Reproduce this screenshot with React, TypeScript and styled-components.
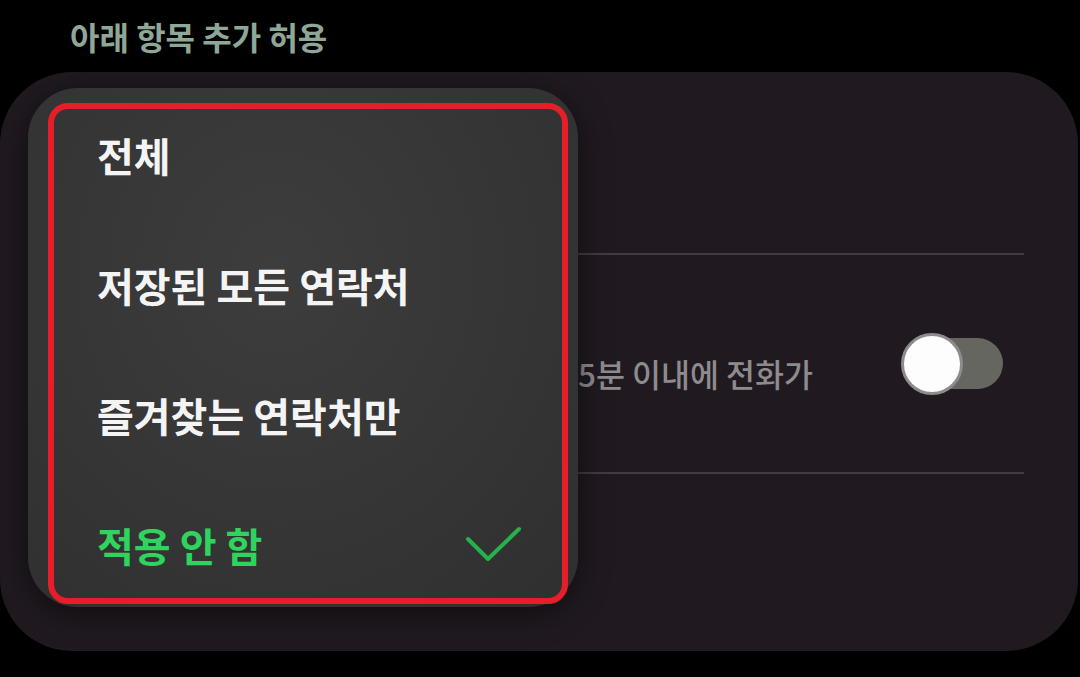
import * as React from 'react';
import styled, {createGlobalStyle} from 'styled-components';

const GlobalStyle = createGlobalStyle`
    html, body {
        margin: 0;
        padding: 0;
        background: #000;
    }
    body {
        font-family: "Noto Sans CJK KR", "Noto Sans", sans-serif;
    }
    * {
        box-sizing: border-box;
    }
`;

const Page = styled.div`
    position: relative;
    width: 1080px;
    height: 677px;
    overflow: hidden;
    background: #000;
    display: flex;
    flex-direction: column;
`;

const SectionTitle = styled.h2`
    margin: 0;
    height: 72px;
    padding-left: 70px;
    display: flex;
    align-items: center;
    font-size: 32px;
    font-weight: 700;
    color: #8fa797;
`;

const Card = styled.section`
    margin-right: 2px;
    height: 579px;
    background: #201a20;
    border-radius: 72px;
    display: flex;
    flex-direction: column;
`;

// the rows sit under the open menu; only their right side shows
const Row = styled.div<{$height: number; $indent: number}>`
    height: ${p => p.$height}px;
    display: flex;
    align-items: center;
    padding: 0 75px 0 ${p => p.$indent}px;
    gap: 40px;
`;

const Divider = styled.hr`
    margin: 0 54px;
    border: none;
    height: 2px;
    background: #433a43;
`;

const TextCol = styled.div`
    flex: 1;
    padding-top: 18px;
`;

const RowSub = styled.div`
    font-size: 31.5px;
    font-weight: 500;
    color: #8e8b8f;
    white-space: nowrap;
`;

const Toggle = styled.div`
    position: relative;
    width: 102px;
    height: 62px;
    flex-shrink: 0;
    display: flex;
    align-items: center;
    justify-content: flex-end;
`;

const Track = styled.div`
    width: 96px;
    height: 51px;
    border-radius: 26px;
    background: #65665f;
`;

const Thumb = styled.div`
    position: absolute;
    left: 0;
    top: 0;
    width: 62px;
    height: 62px;
    border-radius: 50%;
    background: #fdfdfd;
    border: 3px solid #8c8c8c;
`;

const Popup = styled.ul`
    position: absolute;
    left: 28px;
    top: 88px;
    width: 550px;
    height: 519px;
    margin: 0;
    padding: 2px 0 0;
    list-style: none;
    border-radius: 50px;
    background: radial-gradient(ellipse at 45% 35%, #3d3d3d 0%, #363636 50%, #2f2f2f 100%);
    box-shadow: 0 6px 30px rgba(0, 0, 0, 0.55);
`;

const Option = styled.li<{$selected?: boolean}>`
    height: 130px;
    display: flex;
    align-items: center;
    justify-content: space-between;
    padding: 0 55px 0 69px;
    font-size: 40px;
    font-weight: ${p => (p.$selected ? 700 : 600)};
    color: ${p => (p.$selected ? '#2fd45f' : '#f4f4f4')};
`;

const Highlight = styled.div`
    position: absolute;
    left: 48px;
    top: 103px;
    width: 520px;
    height: 501px;
    border: 6px solid #e61e2a;
    border-radius: 20px;
    pointer-events: none;
`;

const CheckIcon = () => (
    <svg width="58" height="38" viewBox="0 0 58 38" fill="none">
        <path d="M3 13 L23 33 L54 3" stroke="#25b24c" strokeWidth="4" strokeLinecap="round" strokeLinejoin="round" />
    </svg>
);

const options = ['전체', '저장된 모든 연락처', '즐겨찾는 연락처만', '적용 안 함'];
const selected = 3;

export default function App() {
    return (
        <>
            <GlobalStyle />
            <Page>
                <SectionTitle>아래 항목 추가 허용</SectionTitle>
                <Card>
                    <Row $height={181} $indent={97} />
                    <Divider />
                    <Row $height={217} $indent={560}>
                        <TextCol>
                            <RowSub>15분 이내에 전화가</RowSub>
                        </TextCol>
                        <Toggle>
                            <Track />
                            <Thumb />
                        </Toggle>
                    </Row>
                    <Divider />
                </Card>
                <Popup>
                    {options.map((option, index) => (
                        <Option key={index} $selected={index === selected}>
                            {option}
                            {index === selected && <CheckIcon />}
                        </Option>
                    ))}
                </Popup>
                <Highlight />
            </Page>
        </>
    );
}
